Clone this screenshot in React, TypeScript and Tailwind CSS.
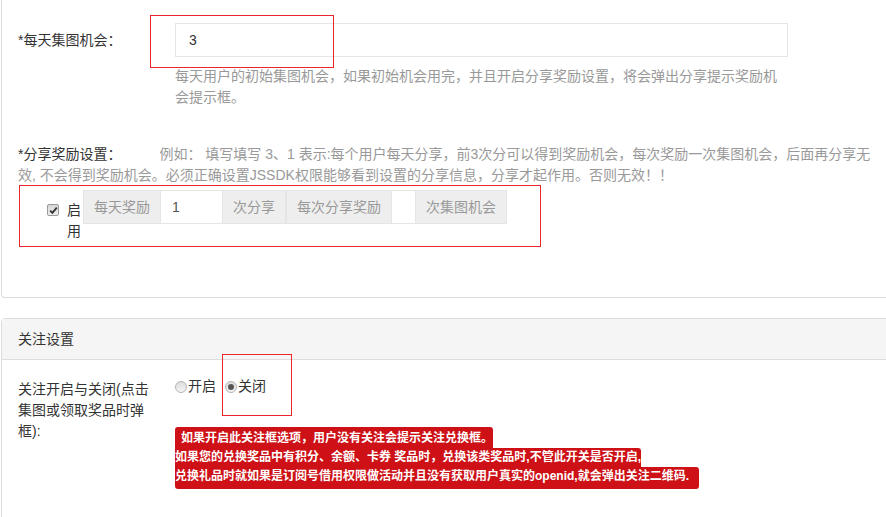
import React from "react";

const Addon: React.FC<{ text: string }> = ({ text }) => (
  <span className="flex h-[34px] items-center border border-[#e5e5e5] bg-[#eeeeee] px-[10px] text-[#999]">
    {text}
  </span>
);

const Radio: React.FC<{ label: string; checked?: boolean }> = ({ label, checked }) => (
  <label className="flex items-center">
    <span className="flex h-[12px] w-[12px] items-center justify-center rounded-full border border-[#b5b5b5] bg-gradient-to-b from-[#dcdcdc] to-[#f4f4f4]">
      {checked && <span className="h-[6px] w-[6px] rounded-full bg-[#555]" />}
    </span>
    <span className="ml-[1px] text-[#333]">{label}</span>
  </label>
);

const Checkbox: React.FC = () => (
  <span className="flex h-[12px] w-[12px] items-center justify-center rounded-[2px] border border-[#9a9a9a] bg-gradient-to-b from-[#d6d6d6] to-[#eeeeee]">
    <svg width="9" height="9" viewBox="0 0 9 9">
      <path d="M1.2 4.6 L3.4 6.9 L7.8 1.6" fill="none" stroke="#333" strokeWidth="1.8" />
    </svg>
  </span>
);

const App: React.FC = () => {
  return (
    <div className="relative h-[517px] w-[886px] overflow-hidden bg-white font-['Liberation_Sans','Noto_Sans_CJK_SC',sans-serif] text-[14px] leading-[21px]">
      {/* 集图设置 */}
      <div className="ml-[1px] w-[920px] rounded-b-[4px] border border-t-0 border-[#dddddd] pt-[23px] pb-[55px] pl-[16px]">
        <div className="flex">
          <div className="flex h-[34px] w-[157px] items-center text-[#333]">*每天集图机会：</div>
          <div className="w-[613px]">
            <input
              className="block h-[34px] w-full border border-[#e5e5e5] px-[13px] text-[#333] outline-none"
              defaultValue="3"
            />
            <p className="mt-[9px] text-[#999]">
              每天用户的初始集图机会，如果初始机会用完，并且开启分享奖励设置，将会弹出分享提示奖励机会提示框。
            </p>
          </div>
        </div>

        <p className="mt-[36px] w-[862px]">
          <span className="mr-[38px] text-[#333]">*分享奖励设置：</span>
          <span className="text-[#999]">
            例如： 填写填写 3、1 表示:每个用户每天分享，前3次分可以得到奖励机会，每次奖励一次集图机会，后面再分享无效, 不会得到奖励机会。必须正确设置JSSDK权限能够看到设置的分享信息，分享才起作用。否则无效！！
          </span>
        </p>

        <div className="mt-[4px] flex">
          <div className="flex w-[65px] pl-[29px] pt-[10px]">
            <span className="mt-[4px]">
              <Checkbox />
            </span>
            <span className="ml-[8px] w-[14px] text-[#333]">启用</span>
          </div>
          <div className="flex h-[34px]">
            <Addon text="每天奖励" />
            <input className="h-[34px] w-[61px] border-y border-[#e5e5e5] px-[11px] text-[#555] outline-none" defaultValue="1" />
            <Addon text="次分享" />
            <Addon text="每次分享奖励" />
            <input className="h-[34px] w-[23px] border-y border-[#e5e5e5] outline-none" />
            <Addon text="次集图机会" />
          </div>
        </div>
      </div>

      {/* 关注设置 */}
      <div className="mt-[20px] ml-[1px] h-[260px] w-[920px] rounded-t-[4px] border border-[#dddddd]">
        <div className="flex h-[41px] items-center border-b border-[#dddddd] bg-[#f5f5f5] pl-[16px] text-[#333]">
          关注设置
        </div>
        <div className="flex pl-[16px] pt-[19px]">
          <div className="w-[157px] pr-[20px] text-[#333]">关注开启与关闭(点击集图或领取奖品时弹框):</div>
          <div>
            <div className="-mt-[3px] flex gap-[9px]">
              <Radio label="开启" />
              <Radio label="关闭" checked />
            </div>
            <div className="mt-[30px] flex flex-col items-start text-[12px] font-bold leading-[19px] text-white">
              <span className="rounded-tl-[3px] rounded-tr-[3px] bg-[#cd1116] pt-[2px] pl-[6px]">
                如果开启此关注框选项，用户没有关注会提示关注兑换框。
              </span>
              <span className="rounded-tr-[3px] bg-[#cd1116]">
                如果您的兑换奖品中有积分、余额、卡券 奖品时，兑换该类奖品时,不管此开关是否开启,
              </span>
              <span className="rounded-b-[3px] rounded-tr-[3px] bg-[#cd1116] pb-[3px] pr-[10px]">
                兑换礼品时就如果是订阅号借用权限做活动并且没有获取用户真实的openid,就会弹出关注二维码.
              </span>
            </div>
          </div>
        </div>
      </div>

      {/* 标注框 */}
      <div className="absolute left-[150px] top-[15px] h-[53px] w-[184px] border border-[#e8262c]" />
      <div className="absolute left-[19px] top-[185px] h-[62px] w-[522px] border border-[#e8262c]" />
      <div className="absolute left-[222px] top-[354px] h-[62px] w-[70px] border border-[#e8262c]" />
    </div>
  );
};

export default App;
